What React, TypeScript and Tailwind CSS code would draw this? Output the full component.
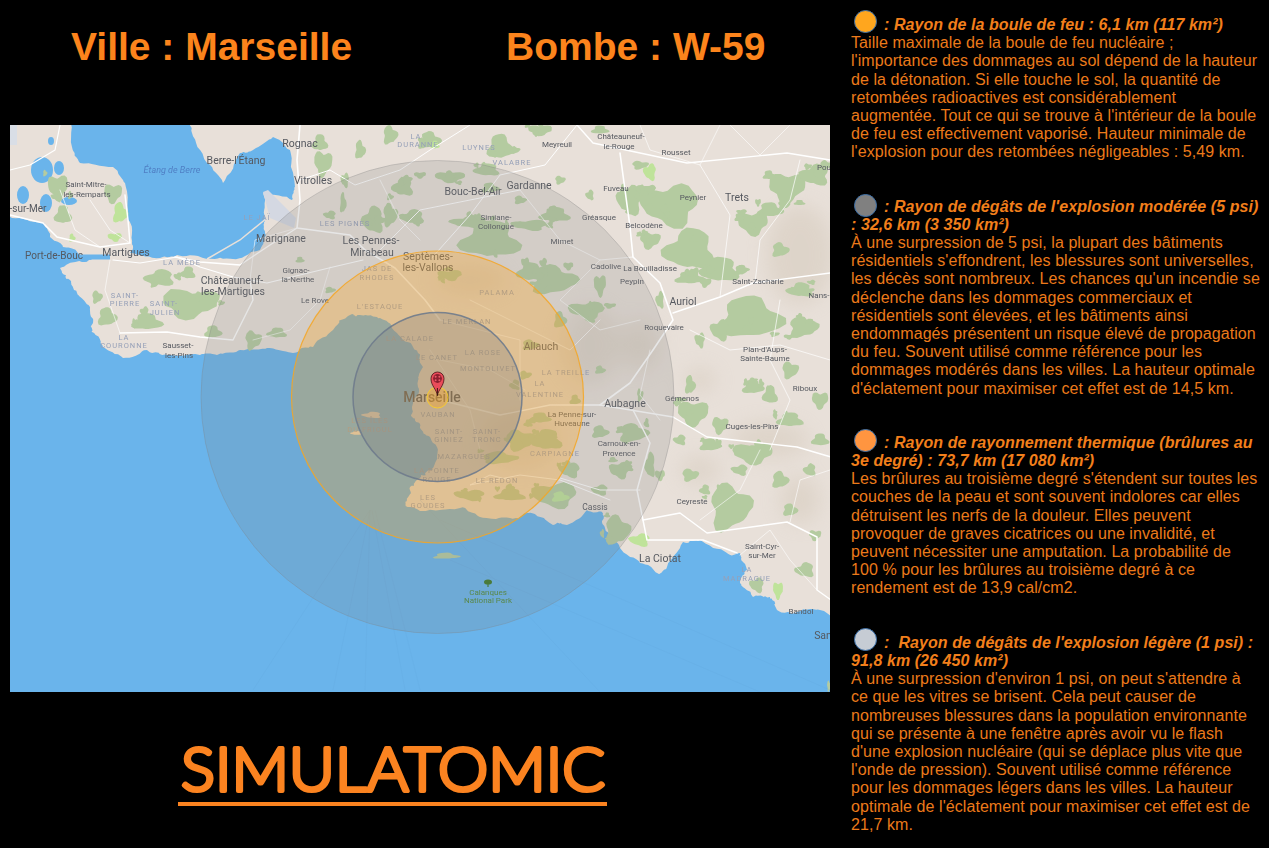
import React from "react";

const ORANGE = "#FB8320";

const noise = (n: number) => {
  const s = Math.sin(n * 12.9898) * 43758.5453;
  return s - Math.floor(s);
};

// smooth irregular outline so the forests don't look like plain ellipses
const blob = (cx: number, cy: number, rx: number, ry: number) => {
  const pts: string[] = [];
  const n = 26;
  const seed = cx * 0.37 + cy * 0.71;
  for (let i = 0; i < n; i++) {
    const a = (i / n) * Math.PI * 2;
    const w = 0.98 + 0.2 * Math.sin(a * 3 + seed) + 0.1 * Math.sin(a * 5 + seed * 2) + 0.06 * (noise(seed + i) - 0.5);
    pts.push(`${(cx + Math.cos(a) * rx * w).toFixed(1)},${(cy + Math.sin(a) * ry * w).toFixed(1)}`);
  }
  return pts.join(" ");
};

// add small bumps to a coast line
const roughen = (line: string, amp: number) => {
  let pts = line.split(" ").map((p) => p.split(",").map(Number));
  for (let it = 0; it < 3; it++) {
    const next: number[][] = [];
    pts.forEach((p, i) => {
      const q = pts[(i + 1) % pts.length];
      const k = i * 7.3 + p[0] * 0.31 + it;
      next.push(p);
      next.push([
        (p[0] + q[0]) / 2 + (noise(k) - 0.5) * amp * (3 - it) * 0.7,
        (p[1] + q[1]) / 2 + (noise(k + 3) - 0.5) * amp * (3 - it) * 0.7,
      ]);
    });
    pts = next;
  }
  return pts.map((p) => `${p[0].toFixed(1)},${p[1].toFixed(1)}`).join(" ");
};

const sea = roughen(
  "0,212 20,218 43,223 50,237 63,247 83,257 100,258 85,262 60,268 70,280 77,293 90,307 93,323 92,332 103,347 123,358 147,350 167,355 200,355 217,355 240,350 267,348 293,353 313,347 333,330 350,315 360,315 380,318 397,333 413,347 423,367 418,387 412,407 412,417 420,427 430,437 437,457 430,470 420,478 410,487 407,500 405,507 420,511 460,508 480,517 510,518 527,513 553,525 567,525 587,510 603,513 605,528 620,548 640,563 660,575 667,567 683,542 700,540 727,553 740,553 747,570 740,583 753,597 770,597 777,610 797,612 820,610 845,630 850,720 -10,720",
  2.4
);

const etang = roughen(
  "70,110 72,147 80,163 113,167 125,183 128,220 132,243 130,253 160,258 177,255 207,259 233,259 260,250 265,233 265,220 263,193 292,200 295,187 290,150 273,137 253,150 240,153 223,183 207,163 192,133 187,110",
  2
);

const forests: number[][] = [
  [58, 187, 10, 12], [113, 193, 9, 9], [63, 215, 8, 9], [160, 278, 14, 8], [188, 273, 7, 6], [97, 297, 5, 6],
  [190, 303, 28, 14], [147, 322, 14, 8], [107, 317, 9, 9], [213, 332, 8, 6], [253, 340, 8, 9], [277, 333, 9, 5],
  [390, 135, 7, 9], [323, 163, 9, 12], [320, 143, 7, 8], [373, 220, 10, 13], [390, 215, 7, 11], [403, 187, 10, 9],
  [413, 217, 11, 7], [343, 203, 3, 10], [500, 147, 12, 12], [450, 177, 15, 5], [490, 188, 8, 5], [487, 170, 12, 6],
  [430, 140, 10, 8], [490, 240, 28, 18], [470, 222, 18, 6], [530, 225, 18, 5], [555, 215, 14, 7], [553, 280, 22, 14],
  [587, 310, 18, 8], [530, 272, 12, 9], [630, 200, 12, 14], [670, 205, 28, 20], [645, 190, 10, 5], [690, 250, 24, 20],
  [720, 270, 18, 12], [690, 278, 14, 6], [753, 223, 15, 11], [787, 187, 18, 14], [815, 175, 14, 10], [770, 210, 12, 7],
  [750, 318, 30, 20], [720, 330, 9, 10], [803, 327, 14, 10], [800, 290, 12, 7], [650, 240, 10, 8], [753, 387, 10, 7],
  [790, 370, 8, 8], [690, 385, 5, 9], [633, 433, 14, 9], [600, 432, 8, 6], [620, 470, 10, 8], [650, 465, 5, 12],
  [693, 413, 15, 12], [720, 425, 8, 8], [753, 453, 20, 10], [710, 445, 10, 6], [730, 507, 20, 22], [690, 475, 8, 6],
  [780, 480, 8, 8], [805, 570, 9, 7], [757, 585, 7, 7], [790, 420, 12, 7], [820, 440, 8, 6], [570, 470, 10, 7],
  [520, 440, 14, 10], [547, 440, 14, 10], [500, 458, 16, 6], [540, 418, 10, 5], [470, 495, 15, 5], [510, 495, 14, 6],
  [555, 495, 22, 12], [617, 530, 12, 14], [600, 490, 8, 5], [575, 400, 5, 5], [515, 385, 5, 5], [530, 345, 8, 5],
  [450, 275, 12, 5], [525, 375, 6, 4], [780, 250, 8, 7], [640, 165, 8, 4], [540, 130, 12, 5], [600, 130, 8, 4],
  [560, 320, 6, 8], [600, 285, 6, 10], [520, 200, 6, 4], [560, 180, 5, 4], [590, 195, 4, 5], [660, 300, 4, 8],
  [700, 340, 5, 7], [680, 440, 6, 5], [770, 395, 7, 9], [820, 400, 8, 8], [810, 470, 6, 6], [660, 475, 5, 5],
  [600, 370, 5, 4], [640, 395, 3, 6], [705, 490, 5, 5], [790, 510, 7, 6], [815, 535, 6, 5], [740, 470, 8, 5],
  [420, 175, 6, 3], [360, 150, 5, 9], [345, 180, 4, 7], [330, 215, 6, 4], [300, 260, 4, 3], [330, 290, 5, 3],
];

// small patches hanging off the larger forests
const patches: number[][] = forests.flatMap(([x, y, rx, ry], i) =>
  rx > 9
    ? [0, 1, 2].map((k) => [
        x + (noise(i + k * 5) - 0.5) * rx * 2.6,
        y + (noise(i + k * 9 + 2) - 0.5) * ry * 2.6,
        2 + noise(i + k) * 4,
        2 + noise(i + k + 4) * 3,
      ])
    : []
);

const lightGreens: number[][] = [
  [120, 213, 7, 10], [115, 237, 7, 4], [72, 238, 3, 4], [650, 172, 6, 8], [560, 497, 8, 5], [640, 540, 10, 6],
  [778, 590, 5, 8], [435, 145, 4, 4],
];

const roads: [string, number][] = [
  ["10,215 43,223 57,237 100,247 130,243 128,220 125,195", 1.5],
  ["60,125 55,150 30,165 10,170", 1.2],
  ["113,260 140,263 177,257 200,267 233,277 267,283 333,267 363,260", 1.2],
  ["120,333 167,332 200,337 233,340 253,300 250,280", 1.4],
  ["300,125 297,160 300,200 297,228 350,235 365,250 395,268 425,300 440,320", 1.6],
  ["297,228 270,245 240,265 200,262 175,257", 1.4],
  ["300,180 330,170 355,185 400,170 430,150 470,125", 1],
  ["577,125 593,143 687,163 787,153 830,160", 1.4],
  ["620,153 630,227 633,257 660,283 673,320 653,350 630,383 600,405", 1.6],
  ["673,313 720,297 753,283 830,273", 1.4],
  ["633,410 650,443 637,490 643,520 680,513 707,533 787,522 817,537 817,590 831,600", 1.5],
  ["643,520 647,540 703,540 737,553", 1.5],
  ["673,417 707,437 797,447 831,457", 1.4],
  ["430,260 470,215 500,175 545,165 577,125", 1],
  ["380,250 420,210 470,200 520,190", 1],
  ["520,190 560,240 600,260 633,257", 0.7],
  ["440,400 500,415 550,405 600,405 673,417", 1.3],
  ["510,480 490,475 470,485 520,475 560,480 610,500", 1],
  ["560,478 600,490 640,490", 1],
  ["800,160 790,200 760,240 755,283", 0.7],
  ["700,165 730,215 720,297", 0.7],
  ["780,300 770,360 790,400 770,450", 0.7],
  ["690,330 730,350 780,345 830,360", 0.7],
  ["650,350 640,395 660,420", 0.7],
  ["380,180 400,220 420,240", 0.7],
  ["470,300 530,330 570,350 600,320", 0.7],
  ["440,320 520,340 520,400", 0.7],
  ["440,360 490,370 525,390", 0.6],
  ["430,350 470,410 480,450", 0.6],
  ["90,200 110,230 130,243", 0.7],
  ["60,190 75,230 100,247", 0.7],
  ["110,260 105,290 120,333", 0.6],
  ["250,280 255,240 297,228", 0.6],
  ["330,267 320,300 290,330 253,340", 0.6],
  ["640,125 650,150 700,165 720,125", 0.6],
  ["730,125 760,155 790,125", 0.6],
  ["600,260 560,300 600,330 640,320", 0.6],
  ["760,450 740,490 700,520", 0.6],
  ["790,522 800,480 830,470", 0.6],
  ["740,555 770,530 790,560 817,590", 0.6],
];

type Label = [string, number, number, number, "city" | "area"];

const labels: Label[] = [
  ["Rognac", 300, 147, 10.5, "city"], ["Berre-l'Étang", 236, 164, 10.5, "city"], ["Vitrolles", 313, 184, 10.5, "city"],
  ["Saint-Mitre-", 86, 187, 8, "city"], ["les-Remparts", 87, 197, 8, "city"], ["-sur-Mer", 28, 212, 10, "city"],
  ["Marignane", 281, 242, 10.5, "city"], ["Les Pennes-", 371, 244, 10.5, "city"], ["Mirabeau", 372, 256, 10.5, "city"],
  ["Septèmes-", 428, 260, 10.5, "city"], ["les-Vallons", 428, 271, 10.5, "city"], ["Gignac-", 296, 273, 8, "city"],
  ["la-Nerthe", 298, 282, 8, "city"], ["Le Rove", 315, 303, 8, "city"], ["Châteauneuf-", 232, 284, 10.5, "city"],
  ["les-Martigues", 233, 295, 10.5, "city"], ["Martigues", 126, 256, 10.5, "city"], ["Port-de-Bouc", 54, 259, 10, "city"],
  ["Sausset-", 178, 348, 8, "city"], ["les-Pins", 179, 358, 8, "city"], ["Bouc-Bel-Air", 473, 195, 10.5, "city"],
  ["Gardanne", 529, 189, 10.5, "city"], ["Meyreuil", 557, 147, 8, "city"], ["Châteauneuf-", 621, 139, 8, "city"],
  ["le-Rouge", 619, 149, 8, "city"], ["Rousset", 676, 155, 8, "city"], ["Fuveau", 616, 191, 8, "city"],
  ["Peynier", 693, 200, 8, "city"], ["Trets", 737, 201, 10.5, "city"], ["Simiane-", 496, 220, 8, "city"],
  ["Collongue", 496, 229, 8, "city"], ["Gréasque", 599, 220, 8, "city"], ["Belcodène", 644, 228, 8, "city"],
  ["Mimet", 562, 244, 8, "city"], ["Cadolive", 606, 269, 8, "city"], ["La Bouilladisse", 650, 271, 8, "city"],
  ["Peypin", 632, 284, 8, "city"], ["Auriol", 683, 305, 10.5, "city"], ["Saint-Zacharie", 758, 284, 8, "city"],
  ["Nans-l", 820, 298, 8, "city"], ["Pou", 824, 170, 8, "city"], ["Roquevaire", 664, 330, 8, "city"],
  ["Plan-d'Aups-", 765, 352, 8, "city"], ["Sainte-Baume", 765, 361, 8, "city"], ["Riboux", 805, 391, 8, "city"],
  ["Gémenos", 682, 401, 8, "city"], ["Aubagne", 625, 407, 10.5, "city"], ["Allauch", 541, 350, 10.5, "city"],
  ["La Penne-sur-", 572, 417, 8, "city"], ["Huveaune", 572, 426, 8, "city"], ["Cuges-les-Pins", 752, 429, 8, "city"],
  ["Carnoux-en-", 619, 446, 8, "city"], ["Provence", 619, 456, 8, "city"], ["Cassis", 595, 510, 8.5, "city"],
  ["Ceyreste", 692, 504, 8, "city"], ["La Ciotat", 660, 562, 10.5, "city"], ["Saint-Cyr-", 762, 549, 8, "city"],
  ["sur-Mer", 762, 558, 8, "city"], ["Bandol", 801, 614, 8, "city"], ["San", 823, 639, 10.5, "city"],
  ["LA", 416, 139, 7.5, "area"], ["DURANNE", 418, 147, 7.5, "area"], ["LUYNES", 479, 150, 7.5, "area"],
  ["VALABRE", 512, 165, 7.5, "area"], ["LES PIGNES", 345, 226, 7.5, "area"], ["LE JAÏ", 257, 220, 7.5, "area"],
  ["LA MÈDE", 182, 265, 7.5, "area"], ["SAINT-", 125, 298, 7.5, "area"], ["PIERRE", 125, 306, 7.5, "area"],
  ["SAINT-", 164, 306, 7.5, "area"], ["JULIEN", 165, 315, 7.5, "area"], ["LA", 124, 340, 7.5, "area"],
  ["COURONNE", 124, 348, 7.5, "area"], ["JAS DE", 377, 271, 7.5, "area"], ["RHODES", 377, 280, 7.5, "area"],
  ["L'ESTAQUE", 380, 309, 7.5, "area"], ["PALAMA", 497, 295, 7.5, "area"], ["CARPIAGNE", 555, 456, 7.5, "area"],
  ["LE REDON", 497, 483, 7.5, "area"], ["LA TREILLE", 566, 375, 7.5, "area"], ["LA", 540, 386, 7.5, "area"],
  ["VALENTINE", 540, 397, 7.5, "area"], ["LE MERLAN", 467, 324, 7.5, "area"], ["LA ROSE", 483, 355, 7.5, "area"],
  ["LE CANET", 437, 360, 7.5, "area"], ["MONTOLIVET", 488, 371, 7.5, "area"], ["LA CALADE", 410, 341, 7.5, "area"],
  ["VAUBAN", 438, 417, 7.5, "area"], ["SAINT-", 449, 434, 7.5, "area"], ["GINIEZ", 449, 442, 7.5, "area"],
  ["SAINT-", 487, 434, 7.5, "area"], ["TRONC", 487, 442, 7.5, "area"], ["MAZARGUES", 464, 459, 7.5, "area"],
  ["LA POINTE", 437, 473, 7.5, "area"], ["ROUGE", 437, 482, 7.5, "area"], ["LES", 428, 500, 7.5, "area"],
  ["GOUDES", 428, 508, 7.5, "area"], ["LES ÎLES", 370, 423, 7.5, "area"], ["DU FRIOUL", 370, 432, 7.5, "area"],
  ["LA", 747, 572, 7.5, "area"], ["MADRAGUE", 747, 581, 7.5, "area"],
];

const seaLanes = [
  [370, 510, 253, 690], [370, 510, 333, 690], [370, 510, 365, 690], [372, 510, 405, 690],
  [375, 510, 420, 690], [440, 520, 830, 690], [450, 560, 760, 692], [420, 500, 600, 692],
];

const NukeMap = () => (
  <svg viewBox="10 125 820 567" className="block w-[820px] h-[567px]">
    <defs>
      <filter id="shade" x="-30%" y="-30%" width="160%" height="160%">
        <feGaussianBlur stdDeviation="10" />
      </filter>
      <filter id="soft" x="0" y="0" width="100%" height="100%">
        <feGaussianBlur stdDeviation="0.4" />
      </filter>
    </defs>
    <g filter="url(#soft)">
      <rect x="0" y="115" width="840" height="590" fill="#E8E0D9" />
      {/* relief */}
      <g fill="#CFC3B2" opacity="0.4" filter="url(#shade)">
        <ellipse cx="800" cy="255" rx="34" ry="50" />
        <ellipse cx="590" cy="345" rx="30" ry="40" />
        <ellipse cx="640" cy="345" rx="20" ry="26" />
        <ellipse cx="700" cy="380" rx="16" ry="12" />
        <ellipse cx="770" cy="440" rx="40" ry="18" />
        <ellipse cx="800" cy="500" rx="20" ry="24" />
        <ellipse cx="520" cy="440" rx="40" ry="30" />
        <ellipse cx="470" cy="280" rx="36" ry="14" />
        <ellipse cx="700" cy="470" rx="20" ry="14" />
      </g>
      <polygon points={sea} fill="#6AB4EB" />
      <polygon points={etang} fill="#6AB4EB" />
      {/* small lakes west of the étang */}
      <g fill="#6AB4EB">
        <ellipse cx="42" cy="170" rx="11" ry="13" />
        <ellipse cx="59" cy="168" rx="5" ry="7" />
        <ellipse cx="23" cy="195" rx="6" ry="9" />
        <ellipse cx="46" cy="203" rx="6" ry="9" />
        <ellipse cx="69" cy="201" rx="8" ry="4" />
        <ellipse cx="51" cy="141" rx="3" ry="4" />
        <polyline points="60,257 82,257 110,257" fill="none" stroke="#6AB4EB" strokeWidth="5" />
      </g>
      <rect x="10" y="125" width="7" height="20" fill="#D9DEE6" />
      {/* Le Jaï spit and the airport */}
      <polyline points="207,259 240,240 267,218" fill="none" stroke="#E8E0D9" strokeWidth="1.5" />
      <polygon points="263,192 268,190 296,218 294,228 270,218" fill="#D4D8E2" />
      <g fill="#B4CBA0">
        {forests.concat(patches).map(([x, y, rx, ry], i) => (
          <polygon key={i} points={blob(x, y, rx, ry)} />
        ))}
      </g>
      <g fill="#BFE39A">
        {lightGreens.map(([x, y, rx, ry], i) => (
          <polygon key={i} points={blob(x, y, rx, ry)} />
        ))}
      </g>
      {/* islands */}
      <g fill="#E8E0D9">
        <polygon points={blob(372, 415, 9, 3)} />
        <polygon points={blob(356, 433, 5, 2)} />
      </g>
      <polygon points={blob(446, 556, 12, 3)} fill="#B4CBA0" />
      <polygon points={blob(829, 686, 2, 5)} fill="#B4CBA0" />
      <g fill="none" stroke="#FFFFFF" strokeLinecap="round" strokeLinejoin="round">
        {roads.map(([points, width], i) => (
          <polyline key={i} points={points} strokeWidth={width} />
        ))}
      </g>
      <g stroke="#5FA3D8" strokeWidth="0.5" opacity="0.4">
        {seaLanes.map(([x1, y1, x2, y2], i) => (
          <line key={i} x1={x1} y1={y1} x2={x2} y2={y2} />
        ))}
      </g>
      <g textAnchor="middle" fontFamily="Roboto, sans-serif">
        {labels.map(([text, x, y, size, kind], i) => (
          <text
            key={i}
            x={x}
            y={y}
            fontSize={size}
            fill={kind === "city" ? "#55585F" : "#96A0B8"}
            letterSpacing={kind === "area" ? 1 : 0}
          >
            {text}
          </text>
        ))}
        <text x="172" y="173" fontSize="9" fontStyle="italic" fill="#4F7FC4">
          Étang de Berre
        </text>
        <text x="488" y="595" fontSize="8" fill="#4F8A3C">
          Calanques
        </text>
        <text x="488" y="603" fontSize="8" fill="#4F8A3C">
          National Park
        </text>
        <text x="432" y="402" fontSize="14" fontWeight="500" fill="#3E3E42">
          Marseille
        </text>
      </g>
      {/* tree icon */}
      <ellipse cx="488" cy="582" rx="4" ry="2.6" fill="#3C7A2A" />
      <rect x="487.4" y="582" width="1.2" height="5" fill="#3C7A2A" />
    </g>
    {/* blast radii */}
    <circle cx="437.5" cy="397" r="236.5" fill="#808080" fillOpacity="0.2" stroke="#808080" strokeOpacity="0.3" />
    <circle cx="437.5" cy="397" r="146" fill="#FFA61E" fillOpacity="0.3" stroke="#F5A623" strokeOpacity="0.85" strokeWidth="1.2" />
    <circle cx="437.5" cy="397" r="84.5" fill="#808080" fillOpacity="0.3" stroke="#6F7B8C" strokeOpacity="0.9" strokeWidth="1.5" />
    <circle cx="437.5" cy="397.5" r="10.5" fill="#FFA61E" fillOpacity="0.35" stroke="#FFD21E" strokeOpacity="0.8" strokeWidth="1" />
    {/* marker */}
    <path
      d="M437.4,395.5 C436.5,389 431,386 431,378.5 A6.5,6.5 0 0 1 444,378.5 C444,386 438.5,389 437.4,395.5 Z"
      fill="#EA4C5A"
      stroke="#4A1015"
      strokeWidth="0.8"
    />
    <circle cx="437.5" cy="378.5" r="4.4" fill="#8C1F2E" />
    <g fill="#EA5A68">
      <circle cx="435.6" cy="376.8" r="1" />
      <circle cx="439.4" cy="376.8" r="1" />
      <circle cx="435.6" cy="380.2" r="1" />
      <circle cx="439.4" cy="380.2" r="1" />
    </g>
    <line x1="437.4" y1="388" x2="437.4" y2="395.5" stroke="#3A1A10" strokeWidth="1" />
  </svg>
);

type Effect = { color: string; title: string[]; body: string[]; className: string; dotClass: string };

const effects: Effect[] = [
  {
    color: "#FFA61E",
    title: [": Rayon de la boule de feu : 6,1 km (117 km²)"],
    body: [
      "Taille maximale de la boule de feu nucléaire ;",
      "l'importance des dommages au sol dépend de la hauteur",
      "de la détonation. Si elle touche le sol, la quantité de",
      "retombées radioactives est considérablement",
      "augmentée. Tout ce qui se trouve à l'intérieur de la boule",
      "de feu est effectivement vaporisé. Hauteur minimale de",
      "l'explosion pour des retombées négligeables : 5,49 km.",
    ],
    className: "mt-[10px]",
    dotClass: "-mb-[3px]",
  },
  {
    color: "#808080",
    title: [": Rayon de dégâts de l'explosion modérée (5 psi)", ": 32,6 km (3 350 km²)"],
    body: [
      "À une surpression de 5 psi, la plupart des bâtiments",
      "résidentiels s'effondrent, les blessures sont universelles,",
      "les décès sont nombreux. Les chances qu'un incendie se",
      "déclenche dans les dommages commerciaux et",
      "résidentiels sont élevées, et les bâtiments ainsi",
      "endommagés présentent un risque élevé de propagation",
      "du feu. Souvent utilisé comme référence pour les",
      "dommages modérés dans les villes. La hauteur optimale",
      "d'éclatement pour maximiser cet effet est de 14,5 km.",
    ],
    className: "mt-[32px]",
    dotClass: "-mb-[5px]",
  },
  {
    color: "#FF9540",
    title: [": Rayon de rayonnement thermique (brûlures au", "3e degré) : 73,7 km (17 080 km²)"],
    body: [
      "Les brûlures au troisième degré s'étendent sur toutes les",
      "couches de la peau et sont souvent indolores car elles",
      "détruisent les nerfs de la douleur. Elles peuvent",
      "provoquer de graves cicatrices ou une invalidité, et",
      "peuvent nécessiter une amputation. La probabilité de",
      "100 % pour les brûlures au troisième degré à ce",
      "rendement est de 13,9 cal/cm2.",
    ],
    className: "mt-[31px]",
    dotClass: "-mb-[4px]",
  },
  {
    color: "#C6CCD4",
    title: [":\u00a0 Rayon de dégâts de l'explosion légère (1 psi) :", "91,8 km (26 450 km²)"],
    body: [
      "À une surpression d'environ 1 psi, on peut s'attendre à",
      "ce que les vitres se brisent. Cela peut causer de",
      "nombreuses blessures dans la population environnante",
      "qui se présente à une fenêtre après avoir vu le flash",
      "d'une explosion nucléaire (qui se déplace plus vite que",
      "l'onde de pression). Souvent utilisé comme référence",
      "pour les dommages légers dans les villes. La hauteur",
      "optimale de l'éclatement pour maximiser cet effet est de",
      "21,7 km.",
    ],
    className: "mt-[30px]",
    dotClass: "-mb-[3px]",
  },
];

export default function App() {
  return (
    <div
      className="flex w-[1269px] h-[848px] bg-black overflow-hidden text-[#EC7A1A]"
      style={{ fontFamily: '"Liberation Sans", Arial, sans-serif' }}
    >
      <div className="w-[851px] shrink-0 pl-[10px]">
        <div className="flex h-[125px] pl-[61px] gap-[154px] pt-[23px] text-[39px] leading-[48px] font-bold text-[#FC841C]">
          <h1>Ville : Marseille</h1>
          <h1>Bombe : W-59</h1>
        </div>
        <NukeMap />
        <div className="mt-[46px] ml-[168px] w-[429px] border-b-4 border-[#FB8320]">
          <svg viewBox="0 0 429 64" className="block w-[429px] h-[64px] overflow-visible">
            <text
              x="3"
              y="52.5"
              fontFamily="Lato, sans-serif"
              fontSize="62"
              fontWeight="300"
              fill={ORANGE}
              stroke={ORANGE}
              strokeWidth="4.2"
              strokeLinejoin="round"
              textLength="424"
              lengthAdjust="spacingAndGlyphs"
            >
              SIMULATOMIC
            </text>
          </svg>
        </div>
      </div>
      <div className="shrink-0 text-base leading-[18.2px] tracking-[0.07px] whitespace-nowrap">
        {effects.map((effect, i) => (
          <div key={i} className={effect.className}>
            <h2 className="font-bold italic text-[#F27F1B]">
              <span
                className={`inline-block w-[23px] h-[23px] rounded-full border border-[#3B6FA8] ml-[3px] mr-[2.5px] align-baseline ${effect.dotClass}`}
                style={{ backgroundColor: effect.color }}
              />{" "}
              {effect.title[0]}
              {effect.title[1] && (
                <>
                  <br />
                  {effect.title[1]}
                </>
              )}
            </h2>
            <p>
              {effect.body.map((line, k) => (
                <React.Fragment key={k}>
                  {line}
                  <br />
                </React.Fragment>
              ))}
            </p>
          </div>
        ))}
      </div>
    </div>
  );
}
